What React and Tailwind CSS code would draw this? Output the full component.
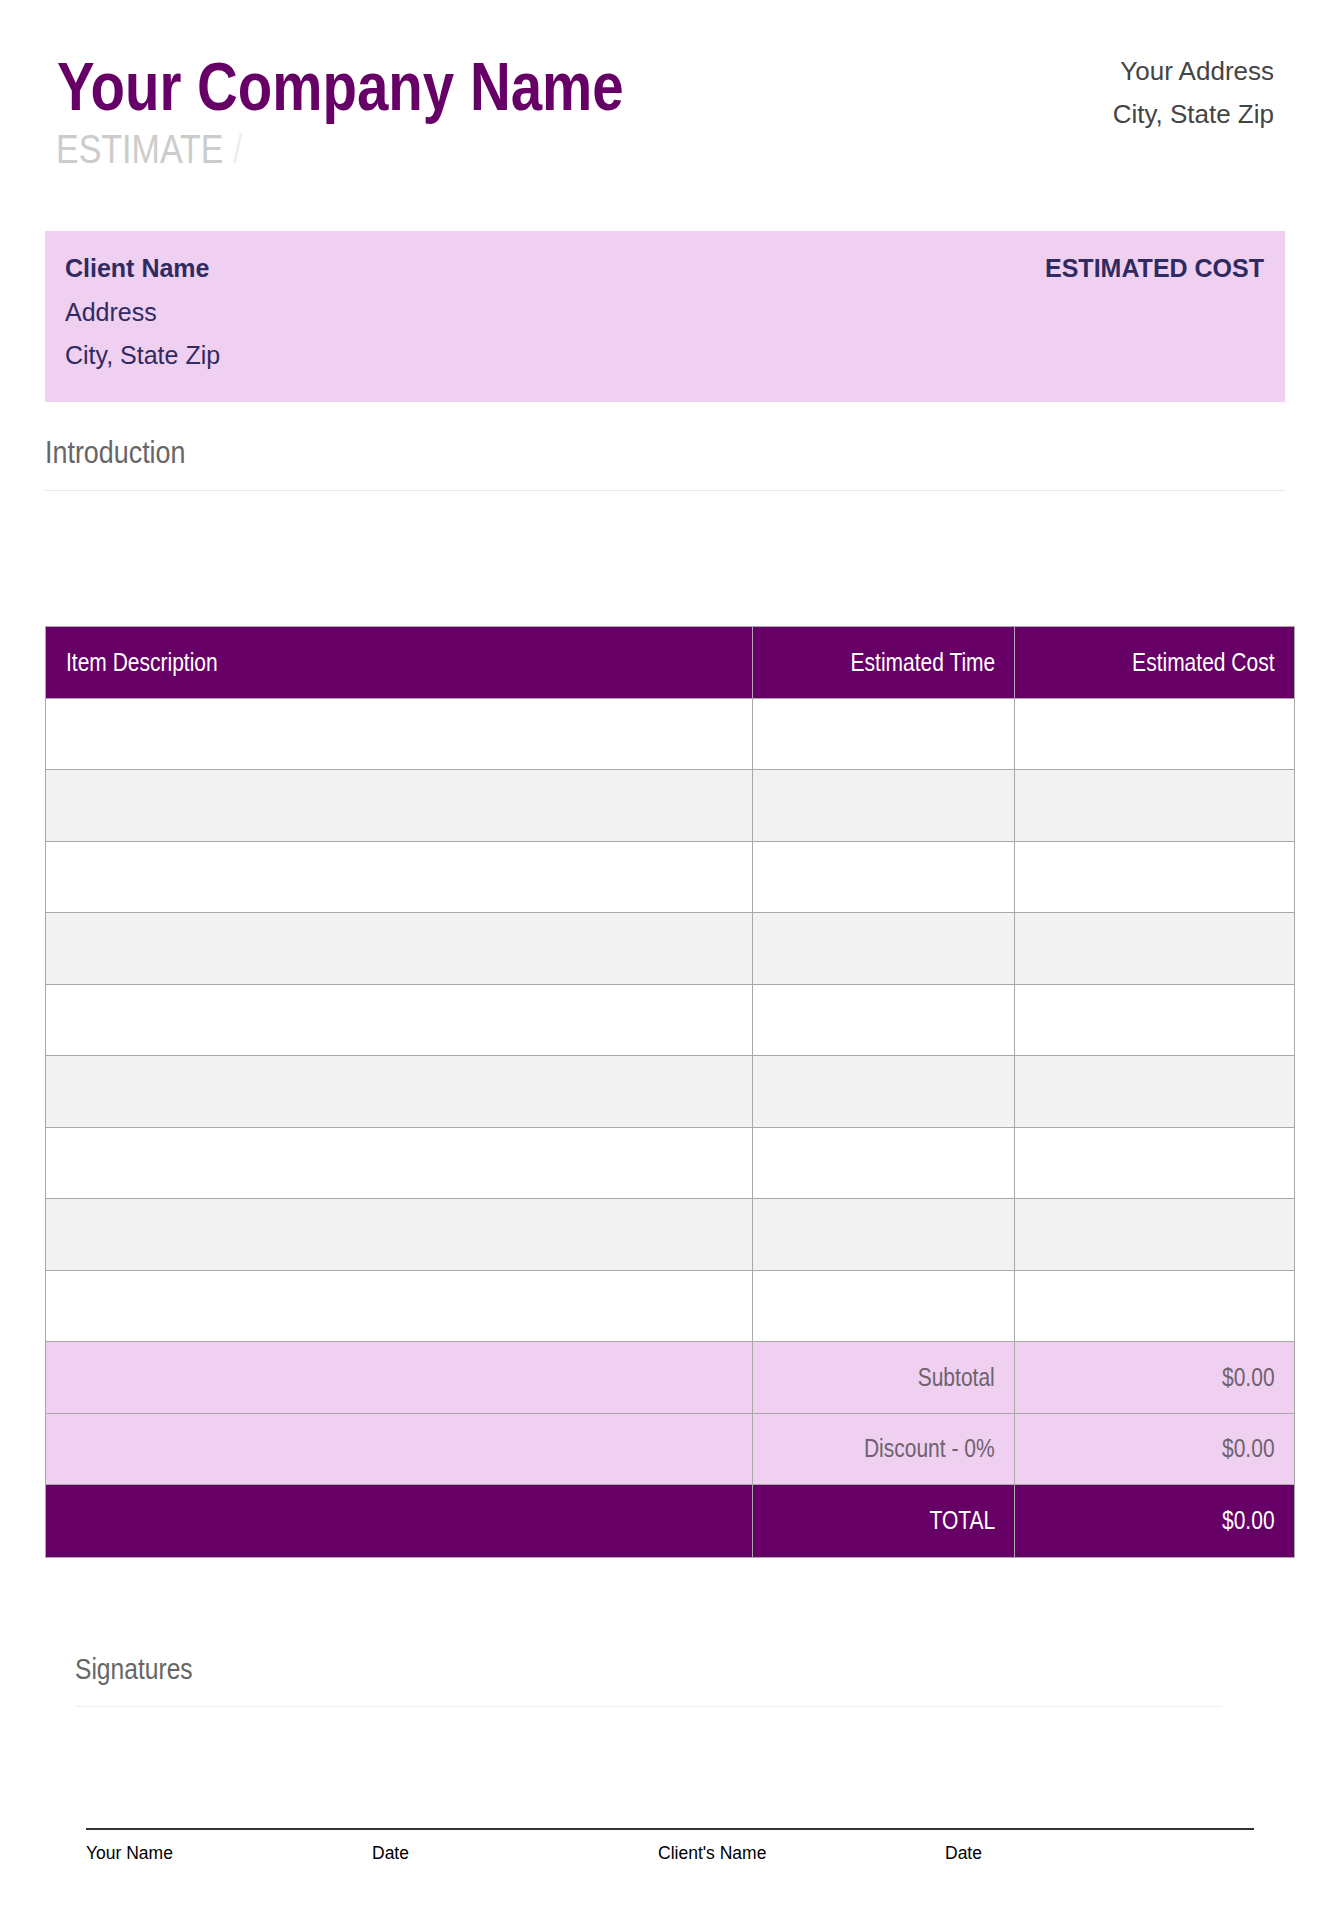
// condensed look: no narrow face installed, so squeeze Liberation Sans horizontally
const narrowL = 'inline-block whitespace-nowrap scale-x-[0.84] origin-left'
const narrowR = 'inline-block whitespace-nowrap scale-x-[0.84] origin-right'

const bodyRows = [0, 1, 2, 3, 4, 5, 6, 7, 8]

function Row({ bg, children, last }) {
  return (
    <div className={`grid grid-cols-[707px_262px_279px] h-[71.5px] ${bg} ${last ? '' : 'border-b border-[#a8a8a8]'}`}>
      {children}
    </div>
  )
}

function RightCell({ text, border }) {
  return (
    <div className={`flex items-center justify-end pr-[19px] ${border ? 'border-r border-[#a8a8a8]' : ''}`}>
      <span className={narrowR}>{text}</span>
    </div>
  )
}

export default function App() {
  return (
    <div className="w-[1340px] min-h-[1920px] bg-white font-['Liberation_Sans',Arial,sans-serif]">
      {/* Header */}
      <div className="flex justify-between items-start pl-[57px] pr-[66px] pt-[50px]">
        <div className="pt-[2px]">
          <h1 className="text-[68px] leading-none font-bold text-[#660066]">
            <span className="inline-block whitespace-nowrap scale-x-[0.83] origin-left">Your Company Name</span>
          </h1>
          <div className="text-[40px] leading-none text-[#cccccc] mt-[9px] -ml-[1px]">
            <span className="inline-block whitespace-nowrap scale-x-[0.85] origin-left">
              ESTIMATE <span className="text-[#eeeeee]">/</span>
            </span>
          </div>
        </div>
        <div className="text-right text-[26px] leading-[43px] text-[#444444]">
          <div>Your Address</div>
          <div>City, State Zip</div>
        </div>
      </div>

      {/* Client box */}
      <div className="ml-[45px] w-[1240px] mt-[62px] h-[171px] bg-[#f0d0f0] flex justify-between pl-[20px] pr-[21px] pt-[16px] text-[#2f2b62]">
        <div className="text-[25px] leading-[43.5px]">
          <div className="font-bold">Client Name</div>
          <div>Address</div>
          <div>City, State Zip</div>
        </div>
        <div className="text-[25px] leading-[43px] font-bold">ESTIMATED COST</div>
      </div>

      {/* Introduction */}
      <div className="ml-[45px] w-[1240px] mt-[34px] pb-[22px] border-b border-[#e8e8e8]">
        <h2 className="text-[32px] leading-none text-[#666666]">
          <span className={narrowL}>Introduction</span>
        </h2>
      </div>

      {/* Items table */}
      <div className="ml-[45px] mt-[135px] w-[1250px] border border-[#a8a8a8] text-[25px]">
        <div className="grid grid-cols-[707px_262px_279px] h-[71.5px] bg-[#660066] text-white border-b border-[#b9a0b9]">
          <div className="flex items-center pl-[20px] border-r border-[#b9a0b9]">
            <span className={narrowL}>Item Description</span>
          </div>
          <div className="flex items-center justify-end pr-[19px] border-r border-[#b9a0b9]">
            <span className={narrowR}>Estimated Time</span>
          </div>
          <div className="flex items-center justify-end pr-[19px]">
            <span className={narrowR}>Estimated Cost</span>
          </div>
        </div>

        {bodyRows.map(i => (
          <Row key={i} bg={i % 2 === 0 ? 'bg-white' : 'bg-[#f2f2f2]'}>
            <div className="border-r border-[#a8a8a8]"></div>
            <div className="border-r border-[#a8a8a8]"></div>
            <div></div>
          </Row>
        ))}

        <Row bg="bg-[#f0d0f0] text-[#6e626e]">
          <div className="border-r border-[#a8a8a8]"></div>
          <RightCell text="Subtotal" border />
          <RightCell text="$0.00" />
        </Row>
        <Row bg="bg-[#f0d0f0] text-[#6e626e]">
          <div className="border-r border-[#a8a8a8]"></div>
          <RightCell text="Discount - 0%" border />
          <RightCell text="$0.00" />
        </Row>
        <Row bg="bg-[#660066] text-white" last>
          <div className="border-r border-[#a8a8a8]"></div>
          <RightCell text="TOTAL" border />
          <RightCell text="$0.00" />
        </Row>
      </div>

      {/* Signatures */}
      <div className="ml-[75px] w-[1147px] mt-[96px] pb-[22px] border-b border-[#eeeeee]">
        <h2 className="text-[30px] leading-none text-[#666666]">
          <span className="inline-block whitespace-nowrap scale-x-[0.82] origin-left">Signatures</span>
        </h2>
      </div>

      <div className="ml-[86px] w-[1168px] mt-[121px] border-t-2 border-[#333333]">
        <div className="flex mt-[15px] text-[17.5px] leading-none text-black">
          <div className="w-[286px]">Your Name</div>
          <div className="w-[286px]">Date</div>
          <div className="w-[287px]">Client's Name</div>
          <div className="w-[286px]">Date</div>
        </div>
      </div>
    </div>
  )
}
